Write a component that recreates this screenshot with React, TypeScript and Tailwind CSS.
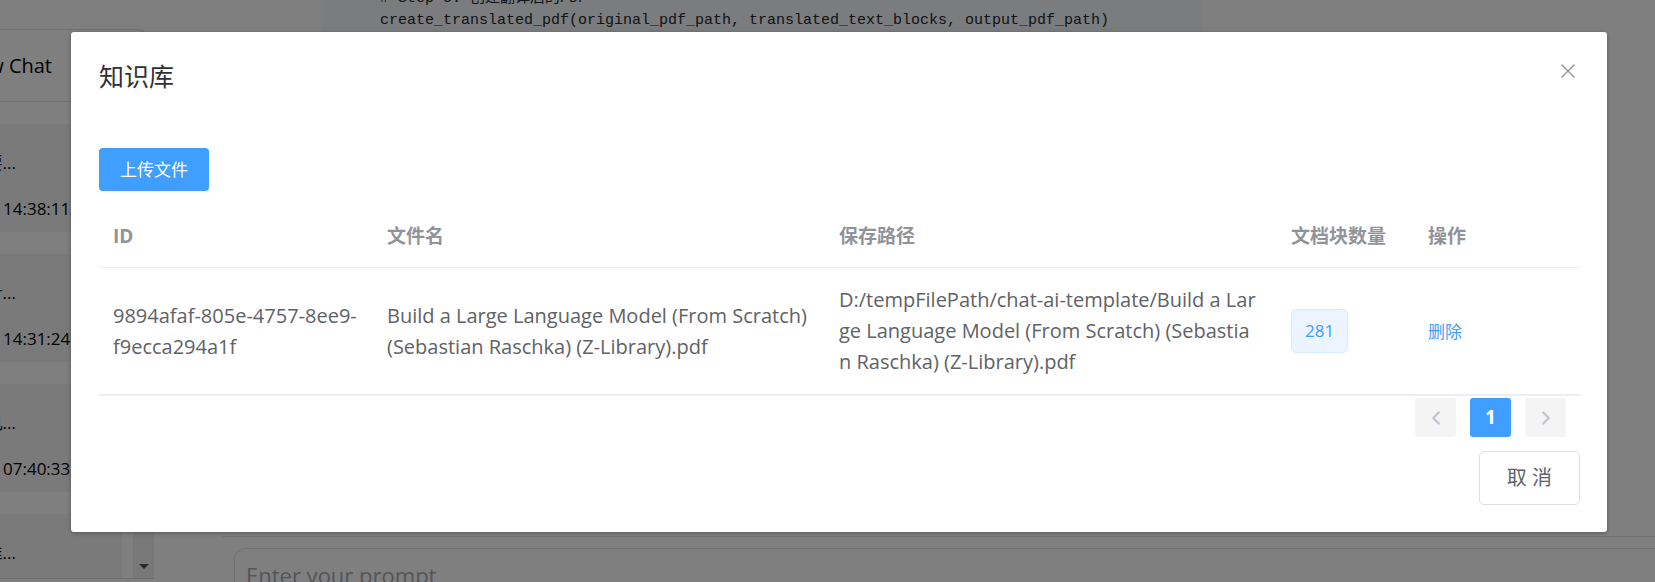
import React from 'react';
import { ChevronLeft, ChevronRight } from 'lucide-react';

const sessions = [
  { title: '要...', time: '14:38:11' },
  { title: '计...', time: '14:31:24' },
  { title: '机...', time: '07:40:33' },
  { title: '推...', time: '07:38:12' },
];

function Sidebar() {
  return (
    <aside className="mb-[3px] flex w-[154px] shrink-0 flex-col border-b border-[#dcdcdc]">
      <div className="mt-[29px] flex h-[73px] w-[146px] items-center justify-end overflow-hidden rounded-tr-lg border-y border-r border-[#e4e4e4] pr-[93px] text-[20px] whitespace-nowrap">
        New Chat
      </div>
      <div className="mt-[22px] flex min-h-0 flex-1">
        <ul className="flex w-[122px] flex-col gap-[22px] overflow-hidden">
          {sessions.map((s) => (
            <li key={s.time} className="flex h-[108px] shrink-0 flex-col bg-[#f5f5f5] pt-[24px] text-[17px]">
              <span className="flex w-4 justify-end whitespace-nowrap leading-[30px]">{s.title}</span>
              <span className="mt-[16px] pl-[3px] leading-[30px]">{s.time}</span>
            </li>
          ))}
        </ul>
        <div className="ml-auto flex w-[21px] items-end justify-center bg-[#f1f1f1] pb-[9px]">
          <svg width="10" height="5" viewBox="0 0 10 5" fill="#505050" aria-hidden="true">
            <path d="M0 0h10L5 5z" />
          </svg>
        </div>
      </div>
    </aside>
  );
}

function ChatArea() {
  return (
    <main className="flex min-w-0 flex-1 flex-col">
      <div className="mb-8 ml-[168px] mr-[453px] flex min-h-0 flex-1 flex-col overflow-hidden bg-[#f6f8fa] pl-[58px] font-['Liberation_Mono','Noto_Sans_CJK_SC',monospace] text-[15px] leading-[22px] text-[#24292e]">
        <pre className="-mt-[12px] font-[inherit]">
          {'# Step 5: 创建翻译后的PDF\ncreate_translated_pdf(original_pdf_path, translated_text_blocks, output_pdf_path)'}
        </pre>
      </div>
      <div className="ml-[69px] h-[46px] shrink-0 overflow-hidden border-t border-[#e0e0e0] pt-[11px] pl-[11px]">
        <textarea
          aria-label="Prompt"
          placeholder="Enter your prompt"
          className="block h-[80px] w-full resize-none rounded-tl-xl border border-r-0 border-[#dcdfe6] px-[11px] pt-[8px] text-[22px] leading-[36px] placeholder:text-[#a8abb2]"
        />
      </div>
    </main>
  );
}

const cell = 'px-[14px] text-left align-middle';

function FileTable() {
  return (
    <table className="mt-[15px] w-full table-fixed border-collapse text-[20px] leading-[31px] text-[#606266]">
      <colgroup>
        <col className="w-[274px]" />
        <col />
        <col />
        <col className="w-[137px]" />
        <col className="w-[166px]" />
      </colgroup>
      <thead>
        <tr className="h-[61px] border-b border-[#ebeef5] text-[19px] font-bold text-[#909399]">
          <th className={cell}>ID</th>
          <th className={cell}>文件名</th>
          <th className={cell}>保存路径</th>
          <th className={cell}>文档块数量</th>
          <th className={cell}>操作</th>
        </tr>
      </thead>
      <tbody>
        <tr className="h-[128px] border-b-2 border-[#ebeef5]">
          <td className={cell}>9894afaf-805e-4757-8ee9-f9ecca294a1f</td>
          <td className={cell}>Build a Large Language Model (From Scratch) (Sebastian Raschka) (Z-Library).pdf</td>
          <td className="pr-[18px] pl-[14px] text-left align-middle break-all">
            D:/tempFilePath/chat-ai-template/Build a Large Language Model (From Scratch) (Sebastian Raschka) (Z-Library).pdf
          </td>
          <td className={cell}>
            <span className="inline-flex h-[44px] items-center rounded-[5px] border border-[#d9ecff] bg-[#ecf5ff] px-[13px] align-middle text-[17px] text-[#409eff]">
              281
            </span>
          </td>
          <td className={cell}>
            <button type="button" className="text-[17px] text-[#409eff]">
              删除
            </button>
          </td>
        </tr>
      </tbody>
    </table>
  );
}

const pageButton = 'flex h-[39px] w-[41px] items-center justify-center rounded-[3px]';

function Pagination() {
  return (
    <nav aria-label="分页" className="mt-[2px] flex justify-end gap-[14px] pr-[14px]">
      <button type="button" disabled aria-label="上一页" className={`${pageButton} bg-[#f4f4f5] text-[#c0c4cc]`}>
        <ChevronLeft size={22} strokeWidth={2.5} />
      </button>
      <button type="button" aria-current="page" className={`${pageButton} bg-[#409eff] text-[19px] font-bold text-white`}>
        1
      </button>
      <button type="button" disabled aria-label="下一页" className={`${pageButton} bg-[#f4f4f5] text-[#c0c4cc]`}>
        <ChevronRight size={22} strokeWidth={2.5} />
      </button>
    </nav>
  );
}

export default function App() {
  return (
    <div className="relative h-screen overflow-hidden bg-white font-['Open_Sans','Noto_Sans_CJK_SC',sans-serif] text-black">
      <div className="flex h-full">
        <Sidebar />
        <ChatArea />
      </div>
      <div className="absolute inset-0 bg-black/50 pt-[32px] pr-[48px] pl-[71px]">
        <section
          role="dialog"
          aria-modal="true"
          aria-labelledby="dialog-title"
          className="rounded-[3px] bg-white pr-[27px] pb-[27px] pl-[28px] shadow-[0_1px_4px_rgba(0,0,0,0.3)]"
        >
          <header className="flex items-start justify-between pt-[27px]">
            <h2 id="dialog-title" className="text-[25px] leading-[34px] text-[#303133]">
              知识库
            </h2>
            <button type="button" aria-label="关闭" className="flex h-[24px] w-[24px] items-center justify-center text-[#909399]">
              <svg width="14" height="14" viewBox="0 0 14 14" stroke="currentColor" strokeWidth="1.4" aria-hidden="true">
                <path d="M0.5 0.5l13 13M13.5 0.5l-13 13" />
              </svg>
            </button>
          </header>
          <div className="mt-[55px]">
            <button type="button" className="block h-[43px] rounded-[4px] bg-[#409eff] px-[21px] text-[17px] text-white">
              上传文件
            </button>
            <FileTable />
            <Pagination />
          </div>
          <footer className="mt-[14px] flex justify-end">
            <button type="button" className="h-[54px] rounded-[5px] border border-[#dcdfe6] px-[27px] text-[20px] text-[#606266]">
              取 消
            </button>
          </footer>
        </section>
      </div>
    </div>
  );
}
